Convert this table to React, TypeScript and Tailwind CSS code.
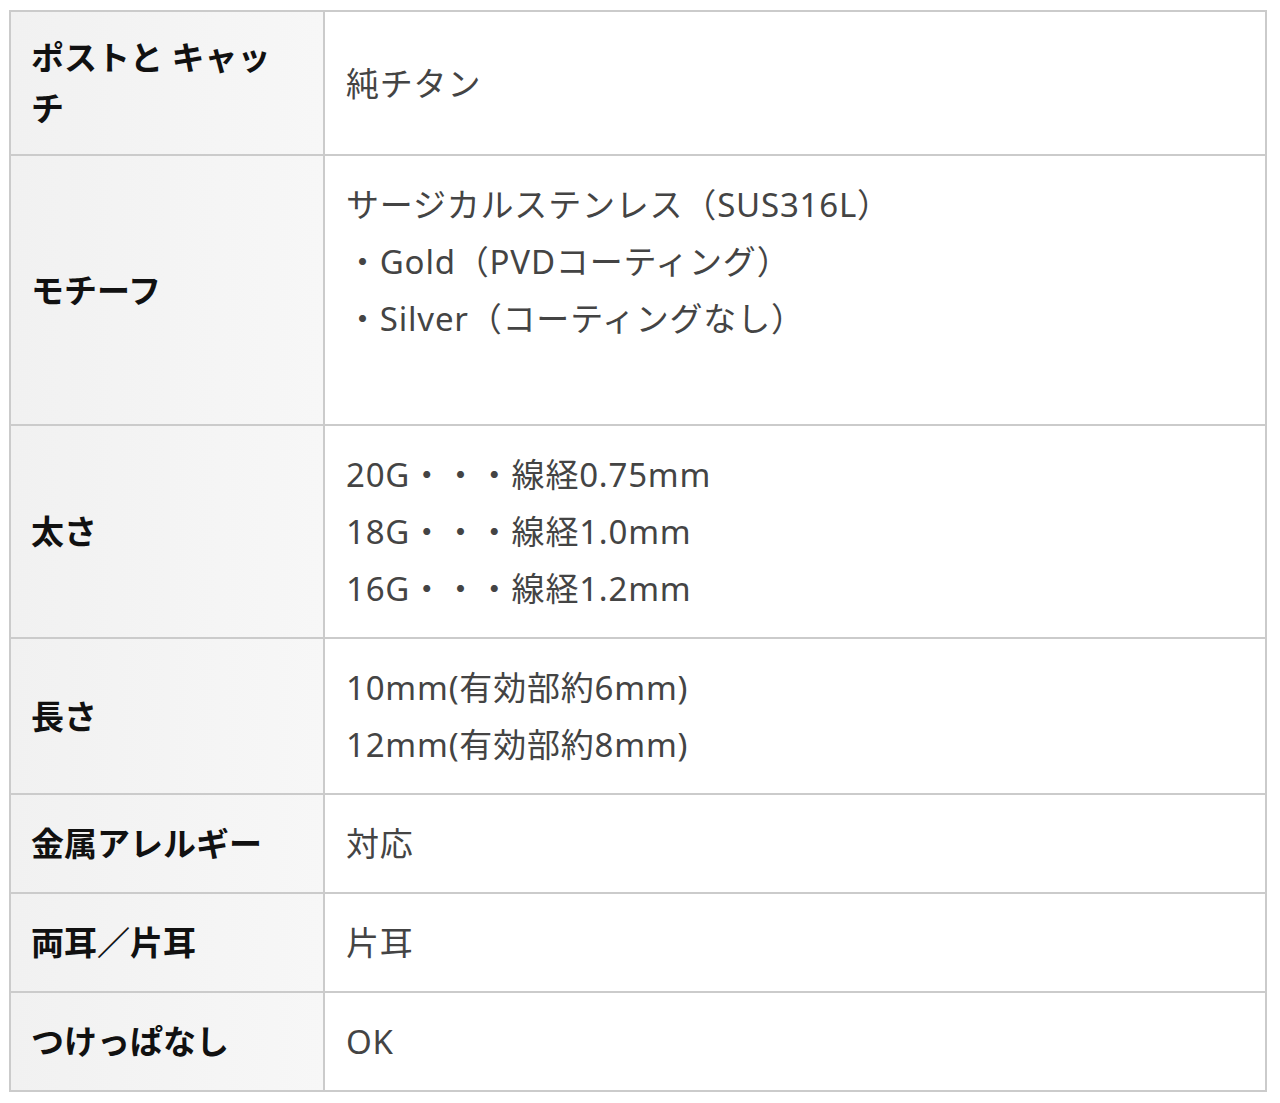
import React from 'react'

const rows: Array<{ label: string; lines: string[] }> = [
  { label: 'ポストと キャッチ', lines: ['純チタン'] },
  {
    label: 'モチーフ',
    lines: ['サージカルステンレス（SUS316L）', '・Gold（PVDコーティング）', '・Silver（コーティングなし）', '\u00a0'],
  },
  { label: '太さ', lines: ['20G・・・線経0.75mm', '18G・・・線経1.0mm', '16G・・・線経1.2mm'] },
  { label: '長さ', lines: ['10mm(有効部約6mm)', '12mm(有効部約8mm)'] },
  { label: '金属アレルギー', lines: ['対応'] },
  { label: '両耳／片耳', lines: ['片耳'] },
  { label: 'つけっぱなし', lines: ['OK'] },
]

export default function App() {
  return (
    <div
      className="min-h-[1103px] bg-white pt-[10px] pl-[9px]"
      style={{ fontFamily: '"Noto Sans", "Noto Sans CJK JP", sans-serif' }}
    >
      <table className="w-[1258px] border-collapse border-2 border-[#cbcbcb]">
        <tbody>
          {rows.map((row) => (
            <tr key={row.label}>
              <th className="w-[314px] border-2 border-[#cbcbcb] bg-gradient-to-r from-[#f1f1f1] to-[#f7f7f7] py-[20px] pl-[20px] pr-[34px] text-left align-middle text-[33px] font-bold leading-[51px] text-[#111]">
                {row.label}
              </th>
              <td className="border-2 border-[#cbcbcb] py-[20px] pl-[21px] pr-[20px] align-middle text-[33px] leading-[57px] tracking-[0.8px] text-[#444]">
                {row.lines.map((line, i) => (
                  <div key={i}>{line}</div>
                ))}
              </td>
            </tr>
          ))}
        </tbody>
      </table>
    </div>
  )
}
